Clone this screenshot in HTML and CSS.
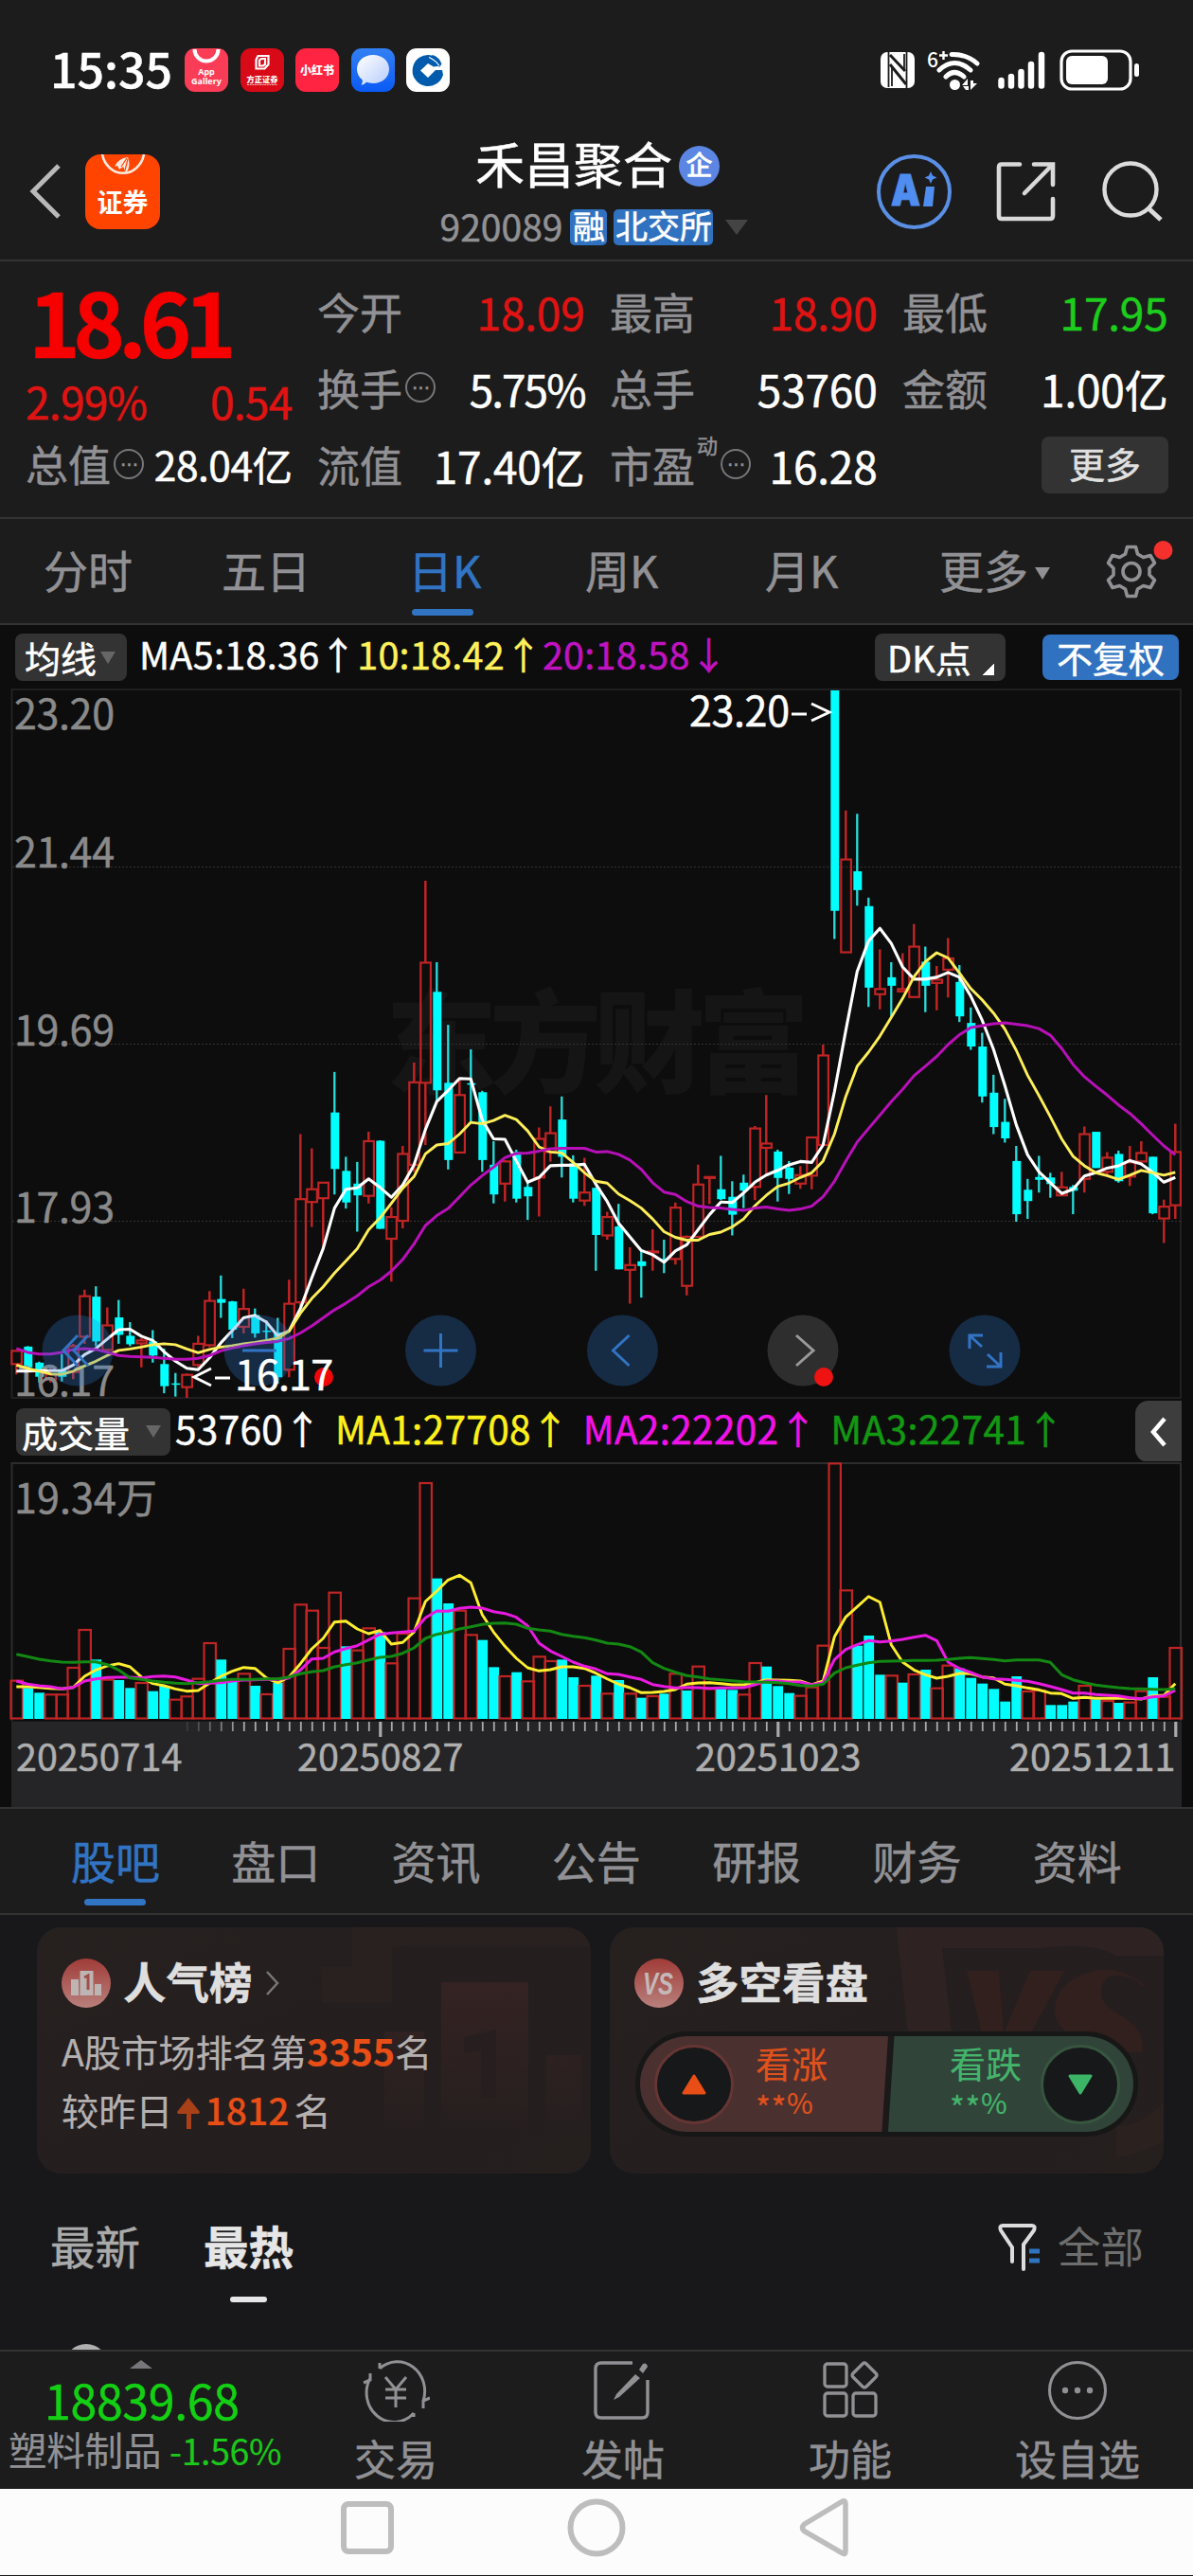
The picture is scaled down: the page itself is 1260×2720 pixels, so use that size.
FILE: index.html
```html
<!DOCTYPE html>
<html lang="zh-CN">
<head>
<meta charset="utf-8">
<title>禾昌聚合 920089</title>
<link rel="stylesheet" href="styles.css">
</head>
<body>
<div class="phone">

<div class="status">
  <span class="clock">15:35</span>
  <div class="notices">
    <svg width="46" height="46" viewBox="0 0 46 46"><rect width="46" height="46" rx="11" fill="#fa3c56"/><path d="M10.500 1a12.500 12.500 0 0 0 25 0" fill="none" stroke="#fff" stroke-width="4"/><text x="23" y="28" class="tiny">App</text><text x="23" y="38" class="tiny">Gallery</text></svg>
    <svg width="46" height="46" viewBox="0 0 46 46"><rect width="46" height="46" rx="11" fill="#d90a17"/><path d="M18.500 8h11v9l-4 4.500h-9V12zM20 12.500v6h4l2-1.500v-6h-4z" fill="none" stroke="#fff" stroke-width="2.200"/><text x="23" y="35.500" class="brand">方正证券</text><path d="M7 38.500h32" stroke="#f6b5b5" stroke-width="1.200" stroke-dasharray="2 .6"/></svg>
    <svg width="46" height="46" viewBox="0 0 46 46"><rect width="46" height="46" rx="11" fill="#ff2442"/><text x="23" y="28" class="brand note">小红书</text></svg>
    <svg width="46" height="46" viewBox="0 0 46 46"><defs><linearGradient id="msg" x2="0" y2="1"><stop stop-color="#3380f3"/><stop offset="1" stop-color="#0a5af5"/></linearGradient><linearGradient id="bub" x2="1" y2="1"><stop stop-color="#fff"/><stop offset="1" stop-color="#b7ccfb"/></linearGradient></defs><rect width="46" height="46" rx="11" fill="url(#msg)"/><path d="M23 7c10 0 17 6.600 17 15s-7 15-17 15q-4-.2-7-1.200-2 2.500-5.500 3 1.800-2.500 1.300-5.300Q6 29 6 22C6 13.600 13 7 23 7z" fill="url(#bub)"/></svg>
    <svg width="46" height="46" viewBox="0 0 46 46"><rect width="46" height="46" rx="11" fill="#fff"/><path d="M26 7.300a16.500 16.500 0 1 0 13 20.700L38 23H31L23 31 15 23.500 23 16l6 3.500 7-1-8-10z" fill="#005bac"/><path d="M28 7q7 2.500 9.500 9.500L35 20Q30 12 24 10z" fill="#005bac"/><path d="M24 9.500q7 3 11 9" fill="none" stroke="#fff" stroke-width="1.200"/></svg>
  </div>
  <div class="signals">
    <svg width="36" height="38" viewBox="0 0 36 38"><rect width="36" height="38" rx="7" fill="#fff"/><path d="M8.500 0V37M27.500 0V38" stroke="#1c1c1c" stroke-width="1.800"/><path d="M10 3L26 20M10 13L27 34" stroke="#1c1c1c" stroke-width="3"/><path d="M12 16V36M25 2V20" stroke="#1c1c1c" stroke-width="1.800"/></svg>
    <svg width="58" height="44" viewBox="0 0 58 44"><text x="0" y="19" class="gen">6</text><path d="M17.500 2v9M13 6.500h9" stroke="#fff" stroke-width="2.400"/><path d="M26 5.500Q42 5 53 15" class="wf"/><path d="M13 22Q29 7 46 22" class="wf"/><path d="M20 29Q29 20 39 29" class="wf"/><circle cx="29.500" cy="37.500" r="5.500" fill="#fff"/><path d="M38 39h6v4h-3M43 31l-6 7h6zM46 33v10l7-7h-4v-3z" fill="#fff"/></svg>
    <svg width="50" height="40" viewBox="0 0 50 40"><path d="M3.500 31V36.500M14 27V36.500M24.500 22V36.500M35 14V36.500M46 4V36.500" stroke="#fff" stroke-width="6.500" stroke-linecap="round"/></svg>
    <svg width="86" height="44" viewBox="0 0 86 44"><rect x="2" y="2" width="73" height="40" rx="11" fill="none" stroke="#fff" stroke-width="3.200"/><rect x="7" y="7" width="44" height="30" rx="6" fill="#fff"/><rect x="79" y="15" width="5" height="14" rx="2.500" fill="#fff"/></svg>
  </div>
</div>

<div class="header">
  <div class="head-left">
    <svg width="36" height="60" viewBox="0 0 36 60"><path d="M32 3L5 30 32 57" fill="none" stroke="#b9b9b9" stroke-width="5"/></svg>
    <svg width="79" height="79" viewBox="0 0 79 79"><rect width="79" height="79" rx="16" fill="#ff4400"/><path d="M18 0a22.500 25 0 0 0 44 0" fill="none" stroke="#ffe9df" stroke-width="2.600"/><path d="M31 13Q35 4 45 3q4 9-2 17l-3-7-4 3-2-4z" fill="#ffe9df"/><path d="M44 4l-6 9m7-8l-3 12" stroke="#ff4400" stroke-width="1.200"/><text x="39.500" y="61" class="logo-text">证券</text></svg>
  </div>
  <div class="head-mid">
    <div class="name">禾昌聚合<span class="qi">企</span></div>
    <div class="code"><span>920089</span><b>融</b><b class="wide">北交所</b><i></i></div>
  </div>
  <div class="head-right">
    <svg width="79" height="79" viewBox="0 0 79 79"><circle cx="39.500" cy="39.500" r="37.500" fill="none" stroke="#5a8fe6" stroke-width="4"/><text x="15" y="54" class="ai" textLength="31" lengthAdjust="spacingAndGlyphs">A</text><path d="M52 34h9l-2 21h-10z" fill="#4f8df0"/><path d="M57 18l2 4.500 4.500 2-4.500 2L57 31l-2-4.500-4.500-2 4.500-2z" fill="#4f8df0"/></svg>
    <svg width="64" height="64" viewBox="0 0 64 64"><path d="M25 3.500H6q-3 0-3 3V58q0 3 3 3H57q3 0 3-3V40M40 3.500H60V25M59 4.500L30 34" fill="none" stroke="#d9d9d9" stroke-width="4.600" stroke-linecap="round"/></svg>
    <svg width="66" height="66" viewBox="0 0 66 66"><circle cx="31" cy="31" r="27.500" fill="none" stroke="#dcdcdc" stroke-width="4.400"/><path d="M50 51l13 12" stroke="#dcdcdc" stroke-width="5"/></svg>
  </div>
</div>

<div class="quote">
  <div class="qcol main">
    <div class="price">18.61</div>
    <div class="chg"><span class="pct">2.99%</span><span>0.54</span></div>
    <div class="cap"><label>总值</label><em>···</em><span>28.04亿</span></div>
  </div>
  <div class="qcol">
    <div><label>今开</label><span class="up">18.09</span></div>
    <div><label>换手</label><em>···</em><span class="pct">5.75%</span></div>
    <div><label>流值</label><span>17.40亿</span></div>
  </div>
  <div class="qcol">
    <div><label>最高</label><span class="up">18.90</span></div>
    <div><label>总手</label><span>53760</span></div>
    <div><label>市盈</label><sup>动</sup><em>···</em><span>16.28</span></div>
  </div>
  <div class="qcol">
    <div><label>最低</label><span class="down">17.95</span></div>
    <div><label>金额</label><span>1.00亿</span></div>
    <div><button>更多</button></div>
  </div>
</div>

<div class="periods">
  <span>分时</span><span>五日</span><span class="on">日K</span><span>周K</span><span>月K</span><span class="more">更多<i></i></span>
  <svg width="76" height="66" viewBox="0 0 76 66"><path d="M24.500 6.500h9l2 7.500 6 3.500 7.500-2 4.500 8-5.500 5.500v7l5.500 5.500-4.500 8-7.500-2-6 3.500-2 7.500h-9l-2-7.500-6-3.500-7.500 2-4.500-8 5.500-5.500v-7L4.500 23.500l4.500-8 7.500 2 6-3.500z" fill="none" stroke="#919195" stroke-width="3.600" stroke-linejoin="round"/><circle cx="29" cy="32.500" r="9" fill="none" stroke="#919195" stroke-width="3.600"/><circle cx="62.500" cy="10" r="10" fill="#f5302d"/></svg>
</div>

<div class="ma-bar">
  <span class="pill ma-pick">均线<i></i></span>
  <span class="ma">MA5:18.36↑<span class="y">10:18.42↑</span><span class="m">20:18.58↓</span></span>
  <span class="pill dk">DK点<i></i></span>
  <span class="pill blue">不复权</span>
</div>

<svg class="pane" id="price" width="1260" height="754" viewBox="0 726 1260 754"></svg>

<div class="vol-bar">
  <span class="pill vol-pick">成交量<i></i></span>
  <span>53760↑</span><span class="y2">MA1:27708↑</span><span class="m2">MA2:22202↑</span><span class="g2">MA3:22741↑</span>
  <span class="fold"><svg width="18" height="32" viewBox="0 0 18 32"><path d="M15 2L3 16 15 30" fill="none" stroke="#fff" stroke-width="4.500"/></svg></span>
</div>

<svg class="pane" id="volume" width="1260" height="365" viewBox="0 1543 1260 365"></svg>

<div class="tabs">
  <span class="on">股吧</span><span>盘口</span><span>资讯</span><span>公告</span><span>研报</span><span>财务</span><span>资料</span>
</div>

<div class="cards">
  <div class="card rank">
    <svg class="ghost" width="300" height="260" viewBox="0 0 300 260"><path d="M48 0h252v20H90v60H16V42h32z" fill="#302423" opacity=".35"/><path d="M142 58h92v155h-92zM82 110h42v103H82zM253 135h37v78h-37z" fill="url(#fade)"/><path d="M166 116l34-8v74h-16v-52l-18 3z" fill="#271f1f"/><defs><linearGradient id="fade" x2="0" y2="1"><stop stop-color="#342322"/><stop offset="1" stop-color="#261f1f"/></linearGradient></defs></svg>
    <h3><svg width="52" height="52" viewBox="0 0 52 52"><defs><linearGradient id="badge" x2="0" y2="1"><stop stop-color="#a03c38"/><stop offset="1" stop-color="#b8807c"/></linearGradient></defs><circle cx="26" cy="26" r="26" fill="url(#badge)"/><path d="M10 22h8v17h-8zM19.500 13h14v26h-14zM35 27h7v12h-7z" fill="#bdb5b4"/><path d="M24 20l4-2v15" fill="none" stroke="#a04f4b" stroke-width="3"/></svg><span>人气榜</span><svg class="chev" width="16" height="28" viewBox="0 0 16 28"><path d="M2 2l11 12L2 26" fill="none" stroke="#777" stroke-width="2.500"/></svg></h3>
    <p>A股市场排名第<b>3355</b>名</p>
    <p>较昨日<svg width="26" height="34" viewBox="0 0 26 34"><path d="M13 1L25 16Q25 18 23 18H16V34H11V18H3Q1 18 1 16z" fill="#a84118"/></svg><b class="n2">1812</b>名</p>
  </div>
  <div class="card duel">
    <svg class="ghost" width="300" height="260" viewBox="0 0 300 260"><path d="M18 0H300V30H250Q225 15 170 22H66L76 112H30z" fill="#2e2322"/><path d="M92 46h34l5 66 28-66h36l-46 86h-36z" fill="#35211f" opacity=".75"/><path d="M283 64q-28-24-56-18-42 10-42 42 0 20 30 33l22 11h40q5-22-21-38-22-12-22-24 0-24 26-18 10 2 17 10z" fill="#35211f" opacity=".75"/><path d="M250 210v33q30-4 50-18v-40q-25 25-50 25z" fill="#2b211f"/></svg>
    <h3><svg width="52" height="52" viewBox="0 0 52 52"><circle cx="26" cy="26" r="26" fill="url(#badge)"/><text x="25" y="38" class="vs" textLength="32" lengthAdjust="spacingAndGlyphs">VS</text></svg><span>多空看盘</span></h3>
    <div class="vote">
      <div class="bull"><span class="disc"><svg width="26" height="22" viewBox="0 0 26 22"><path d="M13 2L24 20H2z" fill="#e84e16" stroke="#e84e16" stroke-width="3" stroke-linejoin="round"/></svg></span><span class="lab">看涨<small><u>**</u>%</small></span></div>
      <div class="bear"><span class="lab">看跌<small><u>**</u>%</small></span><span class="disc"><svg width="26" height="22" viewBox="0 0 26 22"><path d="M13 20L24 2H2z" fill="#3cb567" stroke="#3cb567" stroke-width="3" stroke-linejoin="round"/></svg></span></div>
    </div>
  </div>
</div>

<div class="feed">
  <span>最新</span><span class="hot">最热</span>
  <span class="filter"><svg width="48" height="54" viewBox="0 0 48 54"><path d="M16 42V27L4 9Q2 4 6 4H37Q41 4 39 9L28 24V50" fill="none" stroke="#dcdcdc" stroke-width="4" stroke-linecap="round"/><path d="M34 31h11M34 41h11" stroke="#2f74c0" stroke-width="5"/></svg>全部</span>
</div>
<div class="post"><i></i></div>

<div class="toolbar">
  <div class="index">
    <i></i>
    <strong>18839.68</strong>
    <p>塑料制品 <span>-1.56%</span></p>
  </div>
  <div class="tool"><svg width="72" height="66" viewBox="0 0 72 66"><g fill="none" stroke="#919195" stroke-width="3"><path d="M19 10A29 31 0 0 1 65 44M55 57A29 31 0 0 1 9 20M9 15v7l-7 3M72 41l-7 3v8M19 4v6M55 57v4M25 19l11 13 11-13M36 32V51M25 32H47M25 41H47"/></g></svg>交易</div>
  <div class="tool"><svg width="66" height="66" viewBox="0 0 66 66"><path d="M43 4H10Q4 4 4 10V56Q4 62 10 62H53Q59 62 59 56V22" fill="none" stroke="#919195" stroke-width="3.400"/><path d="M46 16l5 4-22 20-6 3 3-6zM54 5q4-2 5 3l-5 7-4-4z" fill="#919195"/></svg>发帖</div>
  <div class="tool"><svg width="66" height="66" viewBox="0 0 66 66"><g fill="none" stroke="#919195" stroke-width="3.300"><rect x="6" y="5" width="23" height="24" rx="3"/><rect x="6" y="36" width="23" height="24" rx="3"/><rect x="36" y="36" width="24" height="24" rx="3"/><path d="M46 5l-10 10q-2 2 0 4l10 10q2 2 4 0l10-10q2-2 0-4L50 5q-2-2-4 0z"/></g></svg>功能</div>
  <div class="tool"><svg width="66" height="66" viewBox="0 0 66 66"><circle cx="33" cy="33" r="29.500" fill="none" stroke="#919195" stroke-width="3"/><g fill="#919195"><circle cx="20" cy="33" r="3.200"/><circle cx="33" cy="33" r="3.200"/><circle cx="46" cy="33" r="3.200"/></g></svg>设自选</div>
</div>

<div class="nav">
  <svg width="66" height="66" viewBox="0 0 66 66"><rect x="8" y="8" width="50" height="50" rx="5" fill="none" stroke="#bdbdbd" stroke-width="6"/></svg>
  <svg width="66" height="66" viewBox="0 0 66 66"><circle cx="33" cy="33" r="27.500" fill="none" stroke="#bdbdbd" stroke-width="6"/></svg>
  <svg width="66" height="66" viewBox="0 0 66 66"><path d="M51 5Q54 4 54 8V58Q54 62 51 60L11 37Q6 33 11 29z" fill="none" stroke="#bdbdbd" stroke-width="5.500"/></svg>
</div>

</div>
<script src="chart.js"></script>
</body>
</html>
```
FILE: styles.css
```css
* { box-sizing: border-box; margin: 0; padding: 0; }
body {
  width: 1260px;
  background: #1c1c1c;
  color: #fff;
  font-family: "Noto Sans CJK SC", sans-serif;
  -webkit-text-stroke: .5px currentColor;
}
.phone { width: 1260px; height: 2720px; overflow: hidden; background: #1c1c1c; display: flex; flex-direction: column; }
.phone > * { flex: none; }
svg { display: block; flex: none; -webkit-text-stroke: 0; }
i, em { font-style: normal; }
u { text-decoration: none; }

.status { height: 124px; padding: 24px 55px 0 53px; display: flex; align-items: center; }
.clock { font-size: 50px; line-height: 60px; font-weight: 500; margin-top: -7px; width: 142px; letter-spacing: 0; }
.notices { display: flex; gap: 12.500px; }
.signals { margin-left: auto; display: flex; align-items: center; gap: 13px; }
.signals svg:nth-child(3) { margin: 0 2px 0 4px; }
.tiny { font: 700 9px "Noto Sans", sans-serif; fill: #fff; text-anchor: middle; }
.brand { font-size: 8.200px; font-weight: 900; fill: #fff; text-anchor: middle; }
.brand.note { font-size: 12px; }
.gen { font-size: 21px; font-weight: 500; fill: #fff; }
.wf { fill: none; stroke: #fff; stroke-width: 5; stroke-linecap: round; }

.header { height: 152px; border-bottom: 2px solid #333; display: grid; grid-template-columns: 1fr auto 1fr; padding: 0 31px 0 30px; }
.head-left, .head-right { display: flex; align-items: center; height: 156px; }
.head-left { gap: 24px; }
.head-right { justify-content: flex-end; gap: 47px; }
.logo-text { font-size: 27px; font-weight: 700; fill: #fff; text-anchor: middle; font-family: "Noto Sans CJK SC", sans-serif; }
.ai { font: 900 45px Inter, sans-serif; fill: #4f8df0; stroke: #4f8df0; stroke-width: 1; }
.head-mid { display: flex; flex-direction: column; align-items: center; padding-top: 14px; }
.name { font-size: 52px; line-height: 68px; display: flex; align-items: center; margin-top: 0; padding-left: 3px; }
.qi { width: 43px; height: 43px; border-radius: 50%; background: #5b86e4; font-size: 28px; font-weight: 500; line-height: 39px; text-align: center; margin: 6px 0 0 7px; }
.code { display: flex; align-items: center; margin-top: 7px; margin-left: -4px; height: 54px; font-size: 39px; line-height: 50px; color: #919195; }
.code span { margin-top: -5px; margin-right: 8px; }
.code b { background: #3072c0; color: #fff; font-weight: 400; font-size: 34px; line-height: 34px; height: 38px; width: 39px; border-radius: 5px; text-align: center; margin-right: 7px; }
.code .wide { width: 105px; margin-right: 13px; }
.code i { border: 12px solid transparent; border-top: 16px solid #444; border-bottom: 0; }

.quote { height: 272px; padding: 12px 28px 0; border-bottom: 2px solid #333; display: grid; grid-template-columns: 278px 280px 280px 278px; gap: 0 29px; }
.qcol > div { height: 81px; display: flex; align-items: center; font-size: 46px; line-height: 60px; }
.quote label { color: #919195; font-size: 45px; }
.quote div > span { margin-left: auto; margin-right: -2.500px; letter-spacing: -.2px; }
.quote em { width: 32px; height: 32px; border: 2px solid #77777b; border-radius: 50%; color: #919195; font-size: 22px; line-height: 28px; text-align: center; margin-left: 3px; margin-top: -1px; letter-spacing: -1px; flex: none; overflow: hidden; font-family: "Liberation Sans", sans-serif; }
.quote sup { font-size: 22px; line-height: 24px; color: #919195; align-self: flex-start; margin: 7px 0 0 2px; }
.quote .main > .price { height: 100px; font-size: 93px; font-weight: 700; color: #f60000; letter-spacing: -7.500px; margin-left: 2px; }
.quote .main > .chg { height: 70px; color: #e01313; justify-content: space-between; }
.quote .main > .cap { height: 64px; }
.quote .cap label { margin-left: -1px; }
.quote .cap span { font-size: 42.500px; letter-spacing: -.5px; }
.quote .chg span:first-child { margin-left: -1px; }
.quote div > .pct { letter-spacing: -2px; }
.quote .chg span { letter-spacing: -.7px; }
.quote div > .up { color: #e01313; }
.quote div > .down { color: #1ccd1c; }
.quote button { font: 400 38px/54px "Noto Sans CJK SC", sans-serif; background: #333; color: #e0e0e0; border: 0; border-radius: 8px; width: 134px; height: 60px; margin: 1px -3px 0 auto; padding-bottom: 4px; }

.periods { height: 112px; border-bottom: 2px solid #333; display: flex; font-size: 47px; line-height: 105px; color: #919195; padding-left: 46px; }
.periods span { width: 188px; position: relative; }
.periods span:nth-child(3) { margin-left: 9px; width: 187px; }
.periods span:nth-child(4) { width: 190px; }
.periods span:nth-child(5) { width: 184px; }
.on { color: #3274c4; }
.periods .on::after, .tabs .on::after { content: ""; position: absolute; width: 65px; height: 7px; border-radius: 4px; background: #3274c4; bottom: 8px; left: 4px; }
.periods .more { width: 174px; }
.more i { display: inline-block; vertical-align: middle; margin: 0 0 6px 7px; border: 8.500px solid transparent; border-top: 13px solid #919195; border-bottom: 0; }
.periods svg { margin: 23px 0 0 0; }

.ma-bar { height: 66px; background: #0d0d0d; display: flex; align-items: center; padding: 2px 15px 0 16px; font-size: 39.500px; line-height: 56px; }
.pill { background: #333; border-radius: 8px; height: 50px; line-height: 44px; font-size: 38px; display: flex; align-items: center; }
.pill i { border: 8px solid transparent; border-top: 13px solid #666; border-bottom: 0; }
.ma-pick { width: 118px; padding-left: 10px; }
.ma-pick i { margin-left: 4px; }
.ma { margin: -8px 0 0 13px; letter-spacing: .3px; }
.y { color: #fff15c; }
.m { color: #c112c1; }
.pill.dk { margin-left: auto; width: 138px; padding-left: 13px; margin-right: 39px; }
.dk i { border: 0; width: 13px; height: 13px; background: linear-gradient(135deg, transparent 50%, #fff 51%); margin: 24px 0 0 11px; }
.pill.blue { background: #3072c0; width: 144px; justify-content: center; height: 48px; line-height: 42px; }

.pane { background: #0d0d0d; font-family: "Noto Sans CJK SC", sans-serif; }
.axis { font-size: 43px; fill: #8a8a8a; stroke: #8a8a8a; stroke-width: .5; }
.mark { font-size: 43px; fill: #fff; stroke: #fff; stroke-width: .5; }
.date { font-size: 39.500px; fill: #aeaeae; stroke: #aeaeae; stroke-width: .5; }
.water { font-size: 118px; font-weight: 900; fill: #151515; }

.vol-bar { height: 63px; background: #0d0d0d; display: flex; align-items: center; padding-left: 17px; font-size: 40.500px; line-height: 56px; gap: 14px; letter-spacing: .35px; }
.vol-bar > span { margin-top: -8px; }
.vol-bar > .vol-pick { width: 163px; padding-left: 6px; margin: 0 -9px 0 0; letter-spacing: 0; }
.vol-pick i { margin-left: 17px; }
.y2 { color: #fdf01c; } .m2 { color: #f012e8; } .g2 { color: #139813; }
.vol-bar > .fold { margin: 0 12px 0 auto; width: 49px; height: 65px; background: #3d3d3d; border-radius: 14px 0 0 14px; display: flex; align-items: center; padding-left: 16px; }

.tabs { height: 114px; border-top: 2px solid #333; border-bottom: 2px solid #333; display: flex; padding-left: 75px; font-size: 47px; line-height: 107px; color: #919195; }
.tabs span { width: 169.500px; position: relative; }
.tabs .on { color: #3274c4; }
.tabs .on::after { left: 14px; }

.cards { background: #18181a; height: 290px; padding: 13px 31px 0 39px; display: flex; gap: 20px; }
.card { position: relative; flex: 1; height: 260px; border-radius: 26px; background: linear-gradient(150deg, #26201f 0%, #251e1f 60%, #251f1e 100%); overflow: hidden; padding: 33px 0 0 26px; }
.card > * { position: relative; }
.card .ghost { position: absolute; right: 0; top: 0; }
.card h3 { display: flex; align-items: center; height: 52px; font-size: 45.500px; line-height: 52px; font-weight: 700; color: #dedede; gap: 13px; }
.card h3 span { margin-top: -6px; }
.vs { font: italic 900 34px "Liberation Sans", sans-serif; fill: #c4b9b8; text-anchor: middle; }
.card p { display: flex; align-items: center; font-size: 39.200px; line-height: 62px; height: 62px; color: #b4b0b0; -webkit-text-stroke-width: .2px; }
.card h3 + p { margin-top: 14px; }
.card p svg { margin: 8px 5px 0 3px; }
.card p b { color: #e84e16; font-weight: 700; font-size: 39.500px; }
.card p .n2 { font-weight: 500; margin-right: 5px; font-size: 39px; }
.vote { margin: 25px 0 0 1px; width: 531px; height: 111px; border-radius: 56px; border: 5px solid #171717; display: flex; overflow: hidden; background: #1b1919; -webkit-text-stroke-width: .2px; }
.bull, .bear { height: 101px; display: flex; align-items: center; }
.bull { width: 262px; background: #4a302f; color: #e0521c; padding-left: 15px; clip-path: polygon(0 0, 100% 0, 97.500% 100%, 0 100%); }
.bear { width: 259px; background: #30443a; color: #44b46b; padding-left: 65px; clip-path: polygon(2.500% 0, 100% 0, 100% 100%, 0 100%); }
.disc { width: 84px; height: 84px; border-radius: 50%; background: #17181a; border: 3px solid #653634; display: flex; align-items: center; justify-content: center; flex: none; }
.bear .disc { border-color: #37553f; margin-left: 19px; }
.lab { font-size: 38px; line-height: 44px; width: 77px; margin-top: -8px; }
.bull .lab { margin-left: 23px; }
.lab small { display: block; font-size: 30px; line-height: 38px; height: 38px; }
.lab u { font-size: 34px; line-height: 30px; vertical-align: -7px; letter-spacing: .6px; }

.feed { background: #18181a; height: 157px; display: flex; padding: 14px 52px 0 53px; font-size: 47.500px; line-height: 89px; color: #aaa; }
.feed .hot { color: #e6e6e6; font-weight: 700; margin-left: 67px; position: relative; height: 104px; }
.hot::after { content: ""; position: absolute; left: 28px; bottom: -1px; width: 39px; height: 6px; border-radius: 3px; background: #e6e6e6; }
.filter { margin-left: auto; color: #6e6e6e; display: flex; font-size: 45.500px; -webkit-text-stroke-width: 0; }
.filter svg { margin: 20px 16px 0 0; }
.post { background: #18181a; height: 12px; overflow: hidden; padding: 6px 0 0 68px; }
.post i { display: block; width: 46px; height: 46px; border-radius: 50%; background: #b0b0b0; }

.toolbar { height: 147px; border-top: 2px solid #333; display: flex; background: #1c1c1c; }
.index { width: 298px; position: relative; }
.index i { position: absolute; left: 137px; top: 9px; border: 12.500px solid transparent; border-bottom: 9px solid #77777b; border-top: 0; }
.index strong { display: block; font-weight: 400; font-size: 50px; line-height: 60px; color: #14d014; padding: 20px 0 0 47px; letter-spacing: -.3px; }
.index p { font-size: 40.500px; line-height: 44px; color: #919195; white-space: nowrap; padding-left: 9px; letter-spacing: -.2px; margin-top: 1px; -webkit-text-stroke-width: .2px; }
.index p span { font-size: 37.500px; color: #1bc81b; letter-spacing: -.4px; }
.tool { width: 240px; display: flex; flex-direction: column; align-items: center; font-size: 44px; line-height: 50px; color: #919195; padding-top: 8px; gap: 13px; }

.nav { height: 91px; background: #fcfcfc; display: flex; justify-content: center; gap: 176px; padding: 8px 1px 0 0; }
```
FILE: chart.js
```js
// Candles: [rising, high, body top, body bottom, low], in plot units measured down from the pane's top.
const candles = [
[1,1420,1420,1448,1470],[0,1410,1411,1455,1455],[0,1443,1445,1475,1487],[1,1450,1470,1480,1487],[0,1427,1460,1475,1485],
[1,1405,1410,1465,1480],[1,1290,1304,1390,1405],[0,1283,1305,1400,1410],[1,1328,1366,1418,1425],[0,1312,1349,1386,1405],
[0,1359,1388,1406,1410],[1,1393,1398,1404,1455],[0,1376,1400,1430,1445],[0,1415,1448,1495,1510],[0,1467,1489,1491,1517],
[1,1468,1471,1497,1520],[1,1388,1405,1450,1460],[1,1293,1314,1408,1412],[0,1260,1310,1318,1350],[0,1314,1315,1375,1393],
[1,1288,1331,1369,1383],[0,1330,1344,1383,1392],[0,1355,1377,1380,1395],[0,1350,1381,1476,1490],[1,1269,1320,1460,1476],
[1,960,1098,1317,1325],[1,990,1077,1104,1157],[1,1063,1063,1096,1200],[0,828,914,1034,1088],[0,1008,1038,1105,1118],
[0,1019,1065,1090,1167],[1,955,975,1091,1107],[0,973,974,1161,1161],[1,1115,1136,1182,1273],[1,985,1002,1144,1160],
[1,808,850,1025,1040],[1,422,596,851,983],[0,595,658,867,890],[0,728,851,1015,1035],[1,845,877,999,1000],
[0,780,852,854,935],[0,868,871,1015,1040],[0,975,1025,1088,1107],[1,1015,1018,1065,1103],[0,993,998,1097,1105],
[0,1060,1072,1092,1142],[1,946,970,1052,1135],[1,901,958,998,1018],[0,880,929,1008,1052],[0,1005,1022,1097,1105],
[1,1010,1084,1101,1112],[0,1073,1074,1174,1250],[1,1125,1136,1175,1184],[0,1108,1156,1247,1247],[1,1200,1238,1248,1320],
[0,1205,1230,1240,1307],[1,1162,1209,1211,1250],[0,1184,1225,1227,1255],[1,1105,1116,1225,1237],[1,1175,1178,1282,1302],
[1,1025,1067,1178,1180],[1,1050,1051,1053,1108],[0,1006,1077,1098,1100],[0,1060,1093,1131,1175],[0,1046,1063,1080,1117],
[1,943,948,1072,1100],[1,877,980,989,1045],[0,993,997,1053,1103],[0,1017,1031,1055,1087],[1,1028,1047,1065,1076],
[1,966,967,1048,1077],[1,770,793,983,985],[0,18,18,486,546],[1,273,377,574,574],[0,280,402,442,475],
[0,458,476,649,690],[1,568,652,663,695],[0,595,627,645,710],[1,576,652,657,657],[1,514,562,669,669],
[0,562,594,645,701],[1,603,632,639,697],[1,544,587,611,670],[0,601,637,710,722],[0,691,724,774,781],
[0,745,774,880,893],[0,834,872,945,960],[0,885,934,969,978],[0,985,1017,1130,1146],[0,1055,1078,1102,1140],
[0,1006,1051,1057,1084],[0,1042,1052,1066,1095],[1,1040,1073,1090,1090],[0,1068,1072,1080,1130],[1,944,960,1055,1084],
[0,955,955,1032,1032],[1,998,1010,1040,1048],[0,995,1002,1060,1063],[1,985,1020,1050,1070],[1,975,1000,1018,1022],
[0,1008,1008,1128,1130],[1,1099,1114,1139,1191],[1,938,998,1111,1140]];

const ma5 = [1463,1463,1462,1462,1462,1450,1428,1415,1395,1375,1374,1389,1398,1422,1442,1457,1460,1435,1403,1377,1350,1345,1359,1388,1378,1330,1265,1203,1117,1077,1074,1055,1073,1094,1068,1025,950,891,867,842,843,930,970,971,1017,1062,1052,1027,1026,1026,1024,1066,1103,1149,1178,1207,1216,1232,1208,1195,1163,1131,1104,1105,1085,1062,1047,1037,1025,1018,1020,983,870,740,615,550,523,555,605,631,631,627,617,627,667,718,780,857,940,1004,1040,1063,1086,1077,1049,1042,1032,1027,1016,1023,1041,1062,1052];
const ma10 = [1450,1457,1463,1469,1470,1463,1452,1442,1430,1419,1416,1412,1407,1405,1407,1416,1424,1417,1412,1409,1405,1402,1398,1393,1378,1340,1309,1284,1255,1229,1203,1163,1138,1107,1075,1050,1002,983,980,960,935,938,931,920,929,953,987,998,1000,1020,1042,1060,1064,1087,1101,1117,1140,1167,1179,1185,1185,1173,1168,1157,1140,1112,1090,1071,1064,1052,1042,1017,960,880,816,786,752,712,672,626,594,575,586,618,651,675,703,737,782,835,878,923,970,1007,1027,1042,1048,1056,1047,1037,1042,1047,1041];
const ma20 = [1415,1423,1427,1427,1423,1417,1415,1417,1423,1430,1432,1433,1434,1436,1438,1438,1436,1430,1420,1414,1409,1405,1402,1400,1394,1382,1367,1350,1333,1319,1303,1284,1270,1251,1226,1193,1154,1133,1118,1093,1068,1048,1030,1010,1001,1000,996,991,990,990,990,998,997,1003,1015,1035,1063,1083,1088,1103,1113,1116,1117,1120,1122,1117,1115,1119,1122,1119,1113,1093,1060,1017,977,948,920,891,865,836,816,795,770,749,734,730,726,724,727,730,736,750,778,812,838,858,877,898,916,938,962,985,1004];

// Volume bars: bar tops, with one colour letter a day (r rising, c falling).
const vols = [944,967,982,988,988,903,783,877,941,942,967,951,977,960,1004,994,938,825,877,945,922,960,987,950,843,703,722,840,665,835,848,778,790,889,795,683,318,620,699,722,799,815,901,930,917,946,868,882,877,933,960,928,985,942,985,998,993,985,922,975,899,970,970,973,988,888,899,961,983,992,965,833,256,658,833,801,925,928,950,924,909,968,896,905,935,953,970,1010,930,978,975,1021,1021,1010,960,1003,1008,1014,1013,977,933,995,840];
const volCol = 'rccrrrrcrccrccrrrrccrcrcrrrrrcrrcrrrrccrrccrcrrrccrcrcrcrcrcrrccrrcccrrrrrcccrcrcrrccccccrrcccrcrcrrcrr';
const v1 = [963,963,965,968,970,965,930,910,897,890,900,932,953,960,970,977,975,952,930,914,902,905,935,951,932,890,843,810,758,755,780,795,785,828,823,790,693,660,625,610,634,735,790,835,873,903,913,909,900,900,905,920,938,955,966,982,981,978,972,955,951,950,953,957,957,950,941,942,943,945,957,945,805,742,710,677,695,830,885,910,925,936,930,921,922,932,935,955,960,967,973,983,985,1000,997,1000,1000,999,1000,1002,992,990,953];
const v2 = [945,955,960,963,970,965,945,938,934,933,933,935,931,929,932,942,953,952,950,945,942,941,940,940,935,910,875,873,853,842,833,815,797,793,790,787,745,723,724,715,711,714,725,731,743,770,825,850,867,885,898,907,922,924,932,940,956,962,967,965,966,968,967,967,966,957,945,945,948,948,957,950,877,845,830,817,821,818,813,806,800,817,885,905,918,932,938,940,943,946,953,962,972,983,983,988,990,992,998,1001,995,992,975];
const v3 = [860,868,876,881,885,886,884,884,893,910,935,940,945,949,952,953,950,947,943,940,940,940,938,938,932,922,916,912,900,893,887,878,870,867,857,840,810,797,790,780,773,766,762,761,765,778,783,787,797,803,808,815,825,828,836,853,887,905,917,928,932,938,941,944,947,948,949,950,953,959,961,955,920,903,895,887,883,882,881,880,880,879,877,873,871,874,877,881,878,878,878,886,925,941,950,958,962,966,969,970,971,972,970];

const px = i => 17.3 + 12 * i;
const py = v => 720 + v / 2.0103;
const vy = v => 1460 + v / 3;
const RED = '#c02424', CYAN = '#00ffff';
const line = (a, f, c, w) => `<polyline fill="none" stroke="${c}" stroke-width="${w}" stroke-linejoin="round" points="${a.map((v, i) => px(i).toFixed(1) + ',' + f(v).toFixed(1)).join(' ')}"/>`;

let s = '<text class="water" x="407" y="1145" textLength="448">东方财富</text>';
s += '<path d="M12.500 728H1247V1476H12.500z" fill="none" stroke="#262626" stroke-width="1.600"/>';
s += '<path d="M13 915.500H1247M13 1102.500H1247M13 1289.500H1247" stroke="#333" stroke-width="1" stroke-dasharray="2 2"/>';
candles.forEach(([up, h, t, b, l], i) => {
  const x = px(i), T = py(t), B = py(b), H = py(h), L = py(l);
  if (up) {
    s += `<path d="M${x} ${H}V${T}M${x} ${B}V${L}" stroke="${RED}" stroke-width="2.500"/>`;
    s += `<rect x="${x - 5}" y="${T}" width="10.600" height="${Math.max(B - T, 1)}" fill="none" stroke="${RED}" stroke-width="2.200"/>`;
  } else {
    s += `<path d="M${x} ${H}V${L}" stroke="#29dede" stroke-width="2.300"/>`;
    s += `<rect x="${x - 4}" y="${T}" width="9" height="${Math.max(B - T, 1.5)}" fill="${CYAN}"/>`;
  }
});
s += [['23.20', 770], ['21.44', 916], ['19.69', 1103.5], ['17.93', 1291], ['16.17', 1474]]
  .map(([t, y]) => `<text class="axis" x="15" y="${y}" textLength="106">${t}</text>`).join('');
s += line(ma5, py, '#fff', 3.1) + line(ma10, py, '#fdee5a', 2.9) + line(ma20, py, '#b810b8', 3);
s += '<text class="mark" x="728" y="767" textLength="106">23.20</text><path d="M836 754h16M857 743l19 9-19 9" fill="none" stroke="#fff" stroke-width="3"/>';
s += '<circle cx="342" cy="1454" r="10" fill="#f00808"/>';
const btn = (x, body, gray) => `<circle cx="${x}" cy="1426" r="37.500" fill="${gray ? '#2e2e2e' : '#2f7bd4'}" fill-opacity="${gray ? 1 : .28}"/><path transform="translate(${x} 1426)" d="${body}" fill="none" stroke="${gray ? '#9a9a9a' : '#3274c4'}" stroke-width="3"/>`;
s += btn(82, 'M0 -16L-15 0 0 16M11 -16L-4 0 11 16') + btn(274, 'M-18 0H18') + btn(465.5, 'M-18 0H18M0 -18V18')
   + btn(657.5, 'M7 -16L-10 0 7 16') + btn(848, 'M-7 -16L11 0 -7 16', 1) + btn(1040, 'M-2 -16H-16V-2M-16 -16L-3 -4M2 17H17V2M17 17L3 4');
s += '<circle cx="870" cy="1454" r="10" fill="#ee1212"/>';
s += '<text class="mark" x="248" y="1468" textLength="104">16.17</text><path d="M227 1455h16M223 1445l-18 9 18 9" fill="none" stroke="#fff" stroke-width="3"/>';
document.getElementById('price').innerHTML = s;

s = '<path d="M12.500 1817V1545H1247V1817" fill="none" stroke="#2d2d2d" stroke-width="2"/>';
s += '<rect x="12" y="1817.500" width="1236" height="91" fill="#252527"/>';
vols.forEach((v, i) => {
  const x = px(i), T = vy(v);
  s += volCol[i] === 'r'
    ? `<rect x="${x - 5.8}" y="${T}" width="12.400" height="${1814.5 - T}" fill="none" stroke="${RED}" stroke-width="2.200"/>`
    : `<rect x="${x - 5}" y="${T}" width="10.800" height="${1815 - T}" fill="${CYAN}"/>`;
  if (i >= 15) {
    const major = i === 32 || i === 67 || i === 102;
    s += `<path d="M${x + .5} 1818V${major ? 1834 : 1828}" stroke="#aaa" stroke-width="${major ? 3.2 : 1.8}" opacity="${Math.min(1, (i - 14) / 6)}"/>`;
  }
});
s += line(v1, vy, '#fdee30', 2.9) + line(v2, vy, '#e81ae0', 3) + line(v3, vy, '#138813', 3);
s += '<text class="axis" x="15" y="1598" textLength="151">19.34万</text>';
s += [['20250714', 17], ['20250827', 314], ['20251023', 734], ['20251211', 1066]]
  .map(([t, x]) => `<text class="date" x="${x}" y="1870">${t}</text>`).join('');
document.getElementById('volume').innerHTML = s;
```
